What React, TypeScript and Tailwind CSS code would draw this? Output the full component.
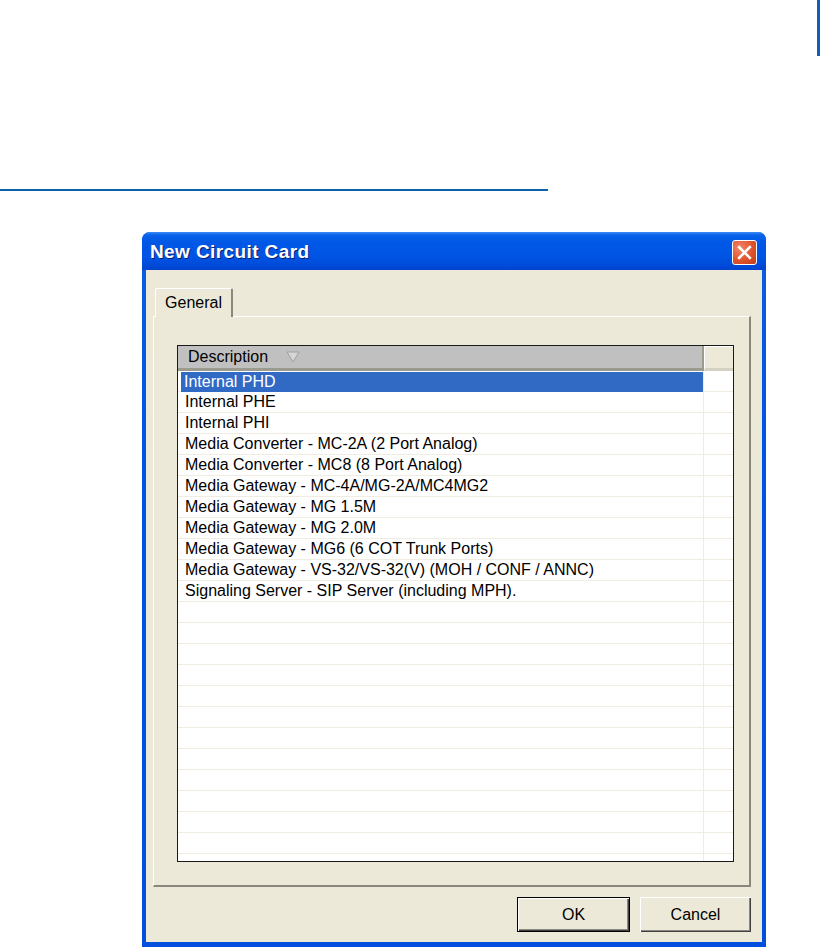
import React from "react";

const items = [
  "Internal PHD",
  "Internal PHE",
  "Internal PHI",
  "Media Converter - MC-2A (2 Port Analog)",
  "Media Converter - MC8 (8 Port Analog)",
  "Media Gateway - MC-4A/MG-2A/MC4MG2",
  "Media Gateway - MG 1.5M",
  "Media Gateway - MG 2.0M",
  "Media Gateway - MG6 (6 COT Trunk Ports)",
  "Media Gateway - VS-32/VS-32(V) (MOH / CONF / ANNC)",
  "Signaling Server - SIP Server (including MPH).",
];

const rows: string[] = [...items];
while (rows.length < 24) rows.push("");

export default function App() {
  return (
    <div className="w-[820px] h-[947px] bg-white overflow-hidden flex flex-col" style={{ fontFamily: '"Liberation Sans", Arial, sans-serif' }}>
      <div className="flex justify-end h-0">
        <div className="w-[3px] h-[56px] bg-[#1060b0] shrink-0" />
      </div>
      <div className="mt-[189px] w-[548px] h-[2px] bg-[#1060b0] shrink-0" />
      <div className="mt-[41px] ml-[142px] w-[624px] flex-1 flex flex-col rounded-t-[8px] bg-[linear-gradient(to_bottom,#0a5fe0,#0054e3_30%,#0050dd)] overflow-hidden">
        {/* Title bar */}
        <div className="h-[38px] shrink-0 flex items-center justify-between pl-[8px] pr-[9px] bg-[linear-gradient(to_bottom,#3b8cf5_0px,#0a64e8_3px,#0058e6_10px,#0054e3_25px,#0049d8_34px,#0042cc_38px)]">
          <span
            className="text-white font-bold text-[19px] tracking-[0.4px] pt-[2px]"
            style={{ fontFamily: '"Liberation Sans", Arial, sans-serif', textShadow: "1px 1px 0 #0a1e70" }}
          >
            New Circuit Card
          </span>
          <div className="w-[25px] h-[25px] mt-[2px] rounded-[3px] border border-white bg-[radial-gradient(circle_at_30%_30%,#f0876a,#e0542c_55%,#c23b17)] flex items-center justify-center">
            <svg width="15" height="15" viewBox="0 0 14 14">
              <path d="M2 2 L12 12 M12 2 L2 12" stroke="white" strokeWidth="2.4" strokeLinecap="square" />
            </svg>
          </div>
        </div>
        {/* Body */}
        <div className="flex-1 flex flex-col ml-[4px] mr-[4px] mb-[5px] bg-[#ece9d8] pl-[7px] pr-[11px] pt-[18px]">
          {/* Tabs */}
          <div className="flex h-[28px] shrink-0">
            <div className="ml-[2px] w-[78px] h-[29px] border-t border-l border-white border-r-2 border-r-[#8a887c] rounded-t-[2px] bg-[#ece9d8] flex items-center justify-center text-[16px] text-black relative z-10 pb-[1px]">
              General
            </div>
          </div>
          {/* Panel */}
          <div className="h-[571px] shrink-0 border-t border-l border-white border-r-2 border-b-2 border-r-[#8a887c] border-b-[#8a887c] pl-[23px] pr-[15px] pt-[28px] pb-[23px] flex flex-col">
            <div className="flex-1 border border-[#1a1a1a] bg-white overflow-hidden flex flex-col">
              {/* Header */}
              <div className="h-[25px] shrink-0 flex">
                <div className="w-[526px] h-full bg-[#c0c0c0] border-b-[3px] border-b-[#9b9a8f] border-r-2 border-r-[#9b9a8f] flex items-center pl-[10px] text-[16px] text-black">
                  <span>Description</span>
                  <svg className="ml-[18px]" width="14" height="12" viewBox="0 0 14 12">
                    <path d="M1 1 L13 1 L7 11 Z" fill="#d6d6d6" stroke="#a0a0a0" strokeWidth="1" />
                  </svg>
                </div>
                <div className="flex-1 h-full bg-[#ece9d8] border-t border-l border-white border-b-[3px] border-b-[#d5d1c2]" />
              </div>
              {/* Rows */}
              <div className="flex-1 flex flex-col">
                {rows.map((r, i) => (
                  <div key={i} className="h-[21px] shrink-0 flex border-b border-[#efece2]">
                    <div className="w-[525px] h-full pl-[3px]">
                      <div
                        className={
                          i === 0
                            ? "h-[20px] mt-[1px] bg-[#316ac5] text-white text-[16px] leading-[20px] pl-[3px] whitespace-nowrap"
                            : "h-full text-black text-[16px] leading-[20px] pl-[4px] whitespace-nowrap"
                        }
                      >
                        {r}
                      </div>
                    </div>
                    <div className="w-[1px] h-full bg-[#efece2]" />
                    <div className="flex-1" />
                  </div>
                ))}
              </div>
            </div>
          </div>
          {/* Buttons */}
          <div className="flex justify-end gap-[10px] mt-[10px] pr-[0px]">
            <button className="w-[113px] h-[35px] border border-black bg-[#ece9d8] text-[16px] text-black shadow-[inset_1px_1px_0_#ffffff,inset_-1px_-1px_0_#404040,inset_-2px_-2px_0_#8a887c]">
              OK
            </button>
            <button className="w-[111px] h-[35px] bg-[#ece9d8] text-[16px] text-black shadow-[inset_1px_1px_0_#ffffff,inset_-1px_-1px_0_#404040,inset_-2px_-2px_0_#8a887c]">
              Cancel
            </button>
          </div>
        </div>
      </div>
    </div>
  );
}
